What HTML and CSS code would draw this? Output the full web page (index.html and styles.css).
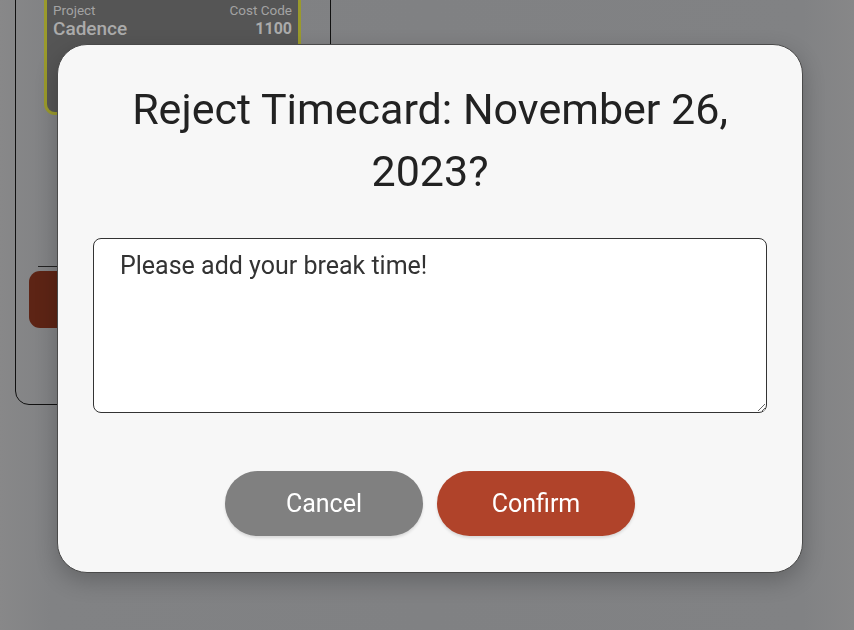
FILE: index.html
```html
<!DOCTYPE html>
<html lang="en">
<head>
<meta charset="utf-8">
<title>Reject Timecard</title>
<link rel="stylesheet" href="styles.css">
</head>
<body>
<div class="page">
  <section class="panel">
    <div class="job-card">
      <div class="job-col">
        <span class="job-label">Project</span>
        <span class="job-value">Cadence</span>
      </div>
      <div class="job-col job-col-right">
        <span class="job-label">Cost Code</span>
        <span class="job-value job-code">1100</span>
      </div>
    </div>
    <div class="panel-divider"></div>
    <button class="panel-action" type="button">Reject</button>
  </section>
</div>

<div class="overlay">
  <div class="modal" role="dialog" aria-labelledby="modal-title">
    <h2 class="modal-title" id="modal-title">Reject Timecard: November 26, 2023?</h2>
    <textarea class="modal-note">Please add your break time!</textarea>
    <div class="modal-actions">
      <button class="btn btn-cancel" type="button">Cancel</button>
      <button class="btn btn-confirm" type="button">Confirm</button>
    </div>
  </div>
</div>
</body>
</html>
```

FILE: styles.css
```css
* { box-sizing: border-box; }

html, body {
  margin: 0;
  height: 100%;
}

body {
  background: linear-gradient(90deg, #888889 0%, #818284 6%, #808183 50%, #818284 94%, #878788 100%);
  font-family: Roboto, "Noto Sans", "Liberation Sans", sans-serif;
  overflow: hidden;
}

.page {
  padding-left: 15px;
}

.panel {
  width: 316px;
  height: 436px;
  margin-top: -31px;
  border: 1px solid #111;
  border-radius: 0 0 14px 14px;
  padding: 0 0 0 28px;
  display: flex;
  flex-direction: column;
}

.job-card {
  width: 257px;
  height: 145px;
  background: #555555;
  border: 3px solid #9a9a2c;
  border-top: none;
  border-radius: 0 0 11px 11px;
  padding: 33px 6px 0 6px;
  display: flex;
  justify-content: space-between;
  align-items: flex-start;
}

.job-col {
  display: flex;
  flex-direction: column;
}

.job-col-right { align-items: flex-end; }

.job-label {
  font-size: 13.5px;
  line-height: 15px;
  color: #a3a3a3;
}

.job-value {
  font-size: 19px;
  line-height: 22px;
  font-weight: 500;
  color: #ababab;
}

.job-code {
  font-size: 16px;
  font-weight: 700;
}

.panel-divider {
  width: 20px;
  height: 1px;
  background: #222;
  margin: 151px 0 0 -6px;
}

.panel-action {
  width: 200px;
  height: 57px;
  margin: 4px 0 0 -15px;
  border: none;
  border-radius: 11px;
  background: #5d2415;
  color: #8a6a60;
  font-family: inherit;
  font-size: 18px;
}

.overlay {
  position: fixed;
  inset: 0;
}

.modal {
  position: absolute;
  left: 57px;
  top: 44px;
  width: 746px;
  height: 529px;
  background: #f7f7f7;
  border: 1px solid #4a4a4a;
  border-radius: 30px;
  box-shadow: 0 8px 22px rgba(0, 0, 0, 0.22);
  padding: 33px 35px 35px 35px;
  display: flex;
  flex-direction: column;
  align-items: center;
}

.modal-title {
  margin: 0;
  padding: 0 10px;
  font-size: 43px;
  line-height: 62px;
  font-weight: 400;
  color: #222222;
  text-align: center;
}

.modal-note {
  display: block;
  width: 674px;
  height: 175px;
  margin-top: 36px;
  padding: 12px 26px;
  border: 1px solid #333333;
  border-radius: 8px;
  background: #ffffff;
  color: #333333;
  font-family: inherit;
  font-size: 25px;
  line-height: 30px;
  resize: both;
}

.modal-actions {
  margin-top: 58px;
  display: flex;
  gap: 14px;
}

.btn {
  width: 198px;
  height: 65px;
  border: none;
  border-radius: 33px;
  color: #ffffff;
  font-family: inherit;
  font-size: 25px;
  box-shadow: 0 2px 3px rgba(0, 0, 0, 0.12);
}

.btn-cancel { background: #808080; }
.btn-confirm { background: #b0432a; }
```
